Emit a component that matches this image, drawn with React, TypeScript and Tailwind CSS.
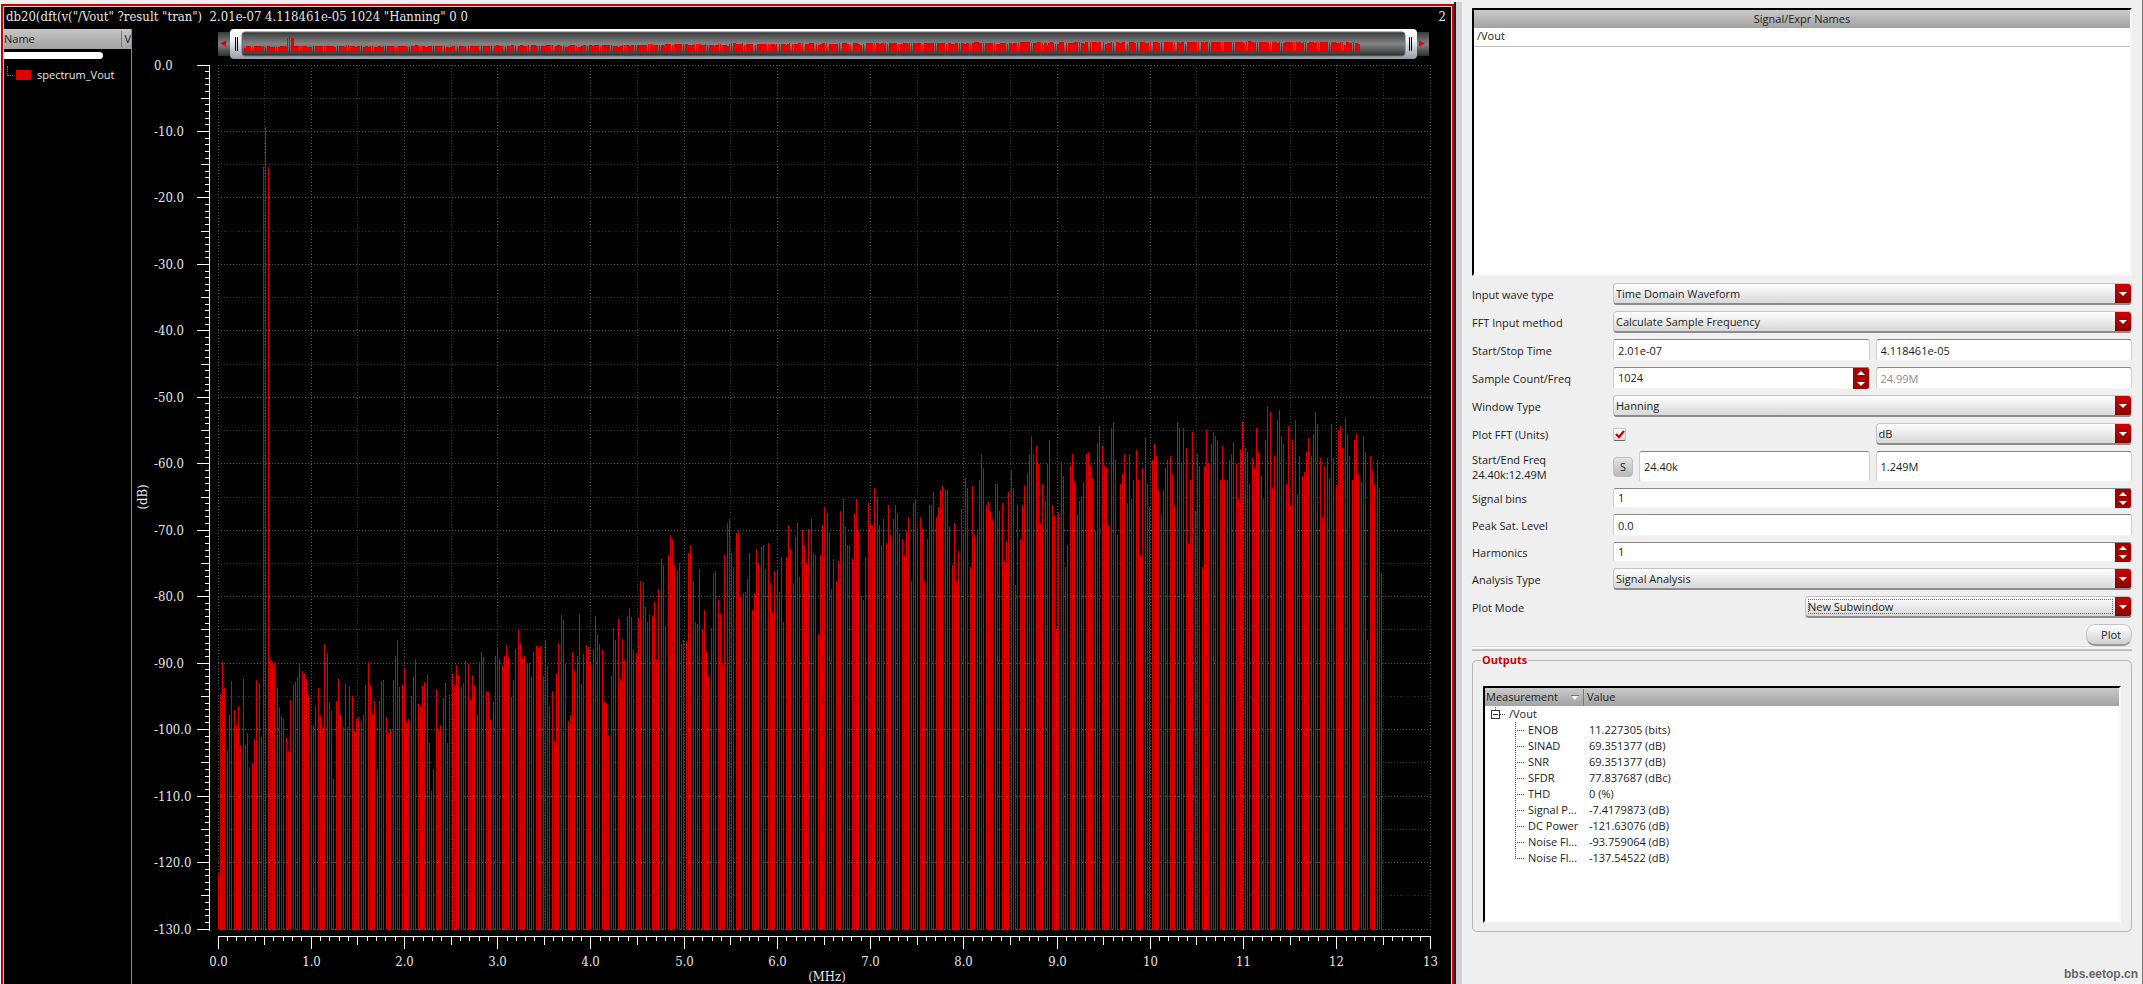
import React, { useState } from 'react';

// FFT magnitude per bin (dB), DC first
const SPECTRUM = [
  -121.6, -94.6, -89.7, -93.6, -103.2, -97.7, -92.6, -96.9, -99.3, -96.3, -102.2, -92.3, -102.2, -100.4, -105.6, -104.9,
  -101.3, -92.4, -93.0, -101.0, -15.3, -9.2, -15.3, -89.4, -89.7, -90.0, -93.6, -96.5, -98.1, -98.4, -101.1, -103.1,
  -95.4, -93.2, -92.7, -92.0, -90.1, -91.1, -91.5, -92.3, -94.7, -99.3, -99.3, -96.3, -93.6, -97.8, -99.5, -87.0,
  -88.4, -95.7, -97.1, -107.4, -95.6, -92.3, -97.8, -99.5, -93.0, -99.5, -93.3, -94.8, -100.2, -98.3, -98.0, -98.6,
  -97.7, -93.2, -89.7, -93.2, -97.5, -95.6, -105.8, -95.6, -92.6, -92.4, -98.1, -100.5, -99.8, -92.4, -88.8, -86.4,
  -93.5, -93.2, -90.6, -98.6, -98.3, -94.8, -92.0, -89.3, -96.0, -96.3, -93.3, -92.7, -91.7, -102.0, -109.2, -105.9,
  -93.8, -99.9, -99.2, -95.1, -92.9, -101.9, -94.7, -91.5, -93.3, -90.2, -91.7, -93.5, -92.9, -89.6, -90.0, -95.3,
  -91.7, -93.2, -97.8, -89.7, -88.2, -89.0, -94.1, -94.2, -98.4, -95.7, -88.8, -87.6, -89.3, -90.2, -88.8, -87.2,
  -89.0, -95.0, -92.4, -87.8, -84.9, -86.9, -89.1, -88.8, -89.9, -89.9, -92.0, -88.2, -87.3, -87.5, -87.3, -91.8,
  -86.4, -90.3, -96.3, -94.1, -101.6, -91.4, -86.9, -82.7, -83.4, -90.0, -98.7, -97.7, -88.2, -90.9, -88.8, -82.5,
  -93.0, -88.5, -87.2, -87.5, -90.0, -87.8, -82.8, -85.7, -87.0, -87.9, -95.7, -95.9, -100.7, -91.8, -84.6, -86.4,
  -83.3, -92.3, -86.3, -89.4, -82.8, -81.6, -83.0, -87.9, -88.4, -83.1, -77.5, -77.7, -81.5, -83.7, -82.5, -82.8,
  -80.7, -89.3, -78.7, -74.3, -75.2, -84.4, -73.7, -70.6, -71.3, -75.1, -76.1, -74.9, -87.0, -86.4, -86.7, -73.4,
  -72.1, -77.6, -83.8, -84.0, -75.7, -84.9, -82.0, -88.2, -91.8, -84.7, -76.4, -76.0, -80.4, -82.5, -90.1, -73.7,
  -68.8, -68.3, -73.4, -75.5, -70.4, -70.0, -79.8, -79.3, -79.2, -77.2, -73.3, -81.9, -79.3, -72.8, -74.8, -72.4,
  -72.1, -75.7, -71.9, -77.9, -82.3, -76.1, -75.8, -79.2, -74.0, -83.7, -74.0, -69.1, -72.7, -77.8, -70.9, -68.9,
  -77.0, -69.8, -72.1, -74.9, -69.7, -68.2, -73.4, -73.7, -85.5, -73.7, -69.2, -66.5, -67.4, -70.3, -78.7, -74.2,
  -77.5, -74.5, -67.1, -65.3, -69.4, -72.2, -72.2, -74.3, -67.3, -65.2, -70.1, -79.8, -80.4, -73.9, -65.8, -68.9,
  -69.2, -63.6, -64.9, -69.1, -72.2, -68.3, -71.9, -66.2, -70.6, -68.2, -66.1, -67.4, -70.4, -71.3, -73.7, -70.0,
  -67.9, -77.6, -65.9, -65.2, -69.7, -67.9, -69.8, -77.6, -71.3, -66.2, -66.2, -64.2, -67.9, -66.5, -63.8, -63.3,
  -63.9, -63.9, -69.5, -75.2, -68.8, -77.6, -73.0, -66.7, -70.4, -62.0, -63.5, -75.4, -63.3, -70.7, -70.0, -62.4,
  -58.4, -60.6, -66.1, -65.6, -67.0, -68.3, -62.9, -62.9, -67.1, -65.9, -74.6, -71.5, -64.1, -60.9, -63.5, -78.2,
  -66.2, -71.2, -66.1, -63.3, -61.5, -58.5, -55.7, -58.5, -57.3, -59.9, -68.9, -63.0, -65.6, -60.0, -56.4, -66.2,
  -67.7, -84.9, -67.4, -59.6, -61.8, -75.4, -72.1, -60.2, -58.5, -62.7, -67.6, -65.5, -64.9, -62.7, -58.4, -58.1,
  -60.2, -62.1, -70.1, -57.0, -54.2, -57.3, -60.3, -60.5, -69.2, -54.5, -53.6, -59.4, -70.6, -63.0, -61.4, -58.5,
  -65.9, -58.5, -65.3, -62.3, -57.8, -62.3, -73.7, -60.6, -56.1, -63.0, -66.4, -59.3, -56.9, -58.8, -63.9, -67.6,
  -63.8, -60.6, -59.3, -58.7, -61.4, -66.1, -53.7, -54.6, -59.9, -54.5, -57.5, -71.9, -62.3, -55.1, -67.0, -58.5,
  -60.3, -75.4, -60.2, -54.8, -60.0, -57.0, -55.1, -55.7, -56.4, -62.3, -57.3, -62.3, -62.3, -59.3, -58.4, -56.7,
  -60.0, -65.2, -57.8, -53.6, -57.5, -58.2, -62.9, -59.0, -60.5, -54.6, -58.1, -61.8, -65.3, -56.3, -51.2, -52.2,
  -63.5, -58.8, -53.3, -51.9, -55.8, -57.0, -63.0, -54.2, -66.1, -56.4, -53.4, -64.6, -58.7, -61.8, -61.1, -58.1,
  -56.1, -58.7, -55.4, -52.2, -53.9, -59.0, -67.9, -60.2, -59.1, -62.0, -53.9, -59.1, -63.2, -54.8, -54.3, -57.5,
  -53.1, -55.5, -58.7, -62.4, -56.4, -55.4, -61.5, -62.7, -55.8, -58.1, -86.4, -58.7, -60.8, -62.9, -59.4, -63.6,
  -76.3,
];

const MEASUREMENTS = [
  ['ENOB', '11.227305 (bits)'],
  ['SINAD', '69.351377 (dB)'],
  ['SNR', '69.351377 (dB)'],
  ['SFDR', '77.837687 (dBc)'],
  ['THD', '0 (%)'],
  ['Signal P...', '-7.4179873 (dB)'],
  ['DC Power', '-121.63076 (dB)'],
  ['Noise Fl...', '-93.759064 (dB)'],
  ['Noise Fl...', '-137.54522 (dB)'],
];

// plot geometry, in viewBox units
const LEFT = 86;
const TOP = 36;
const WIDTH = 1212;
const HEIGHT = 864;

const freqX = (mhz: number) => Math.floor(LEFT + (mhz * WIDTH) / 13) + 0.5;
const dbY = (db: number) => Math.floor(TOP - (db * HEIGHT) / 130) + 0.5;

const range = (n: number) => Array.from({ length: n }, (_, i) => i);

const barsPath = SPECTRUM.map((db, k) => `M${Math.floor(LEFT + 0.1 + k * 2.2724) + 0.5} ${dbY(db)}V901`).join('');

const overviewPath = SPECTRUM.map((db, k) => {
  const x = Math.floor(112 + k * 2.175);
  const w = k !== 20 && k !== 21 && (k % 11 < 3 || (k % 11 > 4 && k % 11 < 9)) ? 3 : 1;
  const h = Math.max(4, Math.round(16 + db * 0.107));
  return `M${x} 23v${-h}h${w}v${h}z`;
}).join('');

const Scrubber: React.FC = () => (
  <g>
    <defs>
      <linearGradient id="track" x1="0" y1="0" x2="0" y2="1">
        <stop offset="0" stopColor="#3a3a3a" />
        <stop offset="0.5" stopColor="#848484" />
        <stop offset="1" stopColor="#2e2e2e" />
      </linearGradient>
      <linearGradient id="frame" x1="0" y1="0" x2="0" y2="1">
        <stop offset="0" stopColor="#ffffff" />
        <stop offset="0.4" stopColor="#eceef2" />
        <stop offset="1" stopColor="#939ca6" />
      </linearGradient>
    </defs>
    <rect x="86" y="3" width="1211" height="24" fill="url(#track)" />
    <rect x="98" y="0" width="1187" height="30" rx="4" fill="url(#frame)" />
    <rect x="110" y="3" width="1163" height="24" rx="3" fill="url(#track)" stroke="#6c7076" />
    <path d="M103.500 8v14M105.500 8v14M1277.500 8v14M1279.500 8v14" stroke="#000" shapeRendering="crispEdges" />
    <path d="M88 14.500l6-3v6zM1293 14.500l-6-3v6z" fill="#e00000" />
    <path d={overviewPath} fill="#e60000" shapeRendering="crispEdges" />
  </g>
);

const SpectrumPlot: React.FC = () => (
  <svg viewBox="0 0 1319 955" className="block w-full h-auto" role="img" aria-label="spectrum_Vout">
    <Scrubber />

    <g shapeRendering="crispEdges" strokeDasharray="1 2">
      {range(27).map((i) => (
        <path key={`h${i}`} d={`M86 ${dbY(-i * 5)}H1299`} stroke={i % 2 ? '#303030' : '#555555'} />
      ))}
      {range(27).map((i) => (
        <path key={`v${i}`} d={`M${freqX(i / 2)} 36V901`} stroke={i % 2 ? '#303030' : '#555555'} />
      ))}
    </g>

    <path d={barsPath} stroke="#dc0000" shapeRendering="crispEdges" />

    <g stroke="#fff" shapeRendering="crispEdges">
      <path d="M77.500 36V902M86 907.500H1299" />
      {range(131).map((i) => (
        <path key={`y${i}`} d={`M${i % 10 === 0 ? 65 : i % 5 === 0 ? 69 : 73} ${dbY(-i)}H77`} />
      ))}
      {range(131).map((i) => (
        <path key={`x${i}`} d={`M${freqX(i / 10)} 907V${i % 10 === 0 ? 920 : i % 5 === 0 ? 916 : 912}`} />
      ))}
    </g>

    <g fill="#e6e6e6" fontSize="13" fontFamily='"DejaVu Serif Condensed", "DejaVu Serif", serif'>
      {range(14).map((i) => (
        <text key={`ly${i}`} x="22" y={dbY(-i * 10) + 4}>
          {i === 0 ? '0.0' : `${-i * 10}.0`}
        </text>
      ))}
      {range(14).map((i) => (
        <text key={`lx${i}`} x={freqX(i)} y="937" textAnchor="middle">
          {i < 10 ? `${i}.0` : i}
        </text>
      ))}
      <text x="695" y="952" textAnchor="middle">(MHz)</text>
      <text x="15" y="468" textAnchor="middle" transform="rotate(-90 15 468)">(dB)</text>
    </g>
  </svg>
);

interface SelectProps {
  id: string;
  value: string;
  className?: string;
  focused?: boolean;
  label?: string;
}

const Select: React.FC<SelectProps> = ({ id, value, className = '', focused, label }) => (
  <div className={`relative flex h-[22px] rounded border border-[#c4c4c4] border-b-2 border-b-[#8c8c8c] bg-linear-to-b from-white to-[#d8d8d8] overflow-hidden ${className}`}>
    <select id={id} aria-label={label} className="flex-1 appearance-none pl-0.5 bg-transparent outline-none">
      <option>{value}</option>
    </select>
    {focused && <span className="absolute inset-y-0.5 left-0.5 right-[18px] border border-dotted border-[#666] pointer-events-none" />}
    <span className="w-4 flex items-center justify-center bg-linear-to-b from-[#cc0000] to-[#8c0000] pointer-events-none">
      <svg width="8" height="4" viewBox="0 0 8 4"><path d="M0 0h8L4 4z" fill="#fff" /></svg>
    </span>
  </div>
);

interface FieldProps {
  id: string;
  value: string;
  className?: string;
  disabled?: boolean;
  label?: string;
}

const fieldClass = 'min-w-0 rounded-[3px] border border-[#cfcfcf] border-t-[#888] border-b-[#f4f4f4] bg-white px-1 outline-none';

const TextField: React.FC<FieldProps> = ({ id, value, className = 'h-[22px]', disabled, label }) => {
  const [text, setText] = useState(value);
  return (
    <input
      id={id}
      aria-label={label}
      value={text}
      disabled={disabled}
      onChange={(e) => setText(e.target.value)}
      className={`w-full disabled:text-[#8a8a8a] ${fieldClass} ${className}`}
    />
  );
};

const SpinField: React.FC<FieldProps> = ({ id, value, className = 'h-5' }) => {
  const [count, setCount] = useState(Number(value));
  return (
    <div className={`flex ${className}`}>
      <input
        id={id}
        value={count}
        onChange={(e) => setCount(Number(e.target.value) || 0)}
        className={`flex-1 rounded-r-none border-r-0 ${fieldClass}`}
      />
      <div className="w-[17px] flex flex-col rounded-r-[3px] border-t border-[#888] border-r border-r-[#cfcfcf] bg-[#a00000] overflow-hidden">
        <button type="button" aria-label="Increase" onClick={() => setCount(count + 1)} className="flex-1 flex items-center justify-center">
          <svg width="8" height="4" viewBox="0 0 8 4"><path d="M0 4h8L4 0z" fill="#fff" /></svg>
        </button>
        <button type="button" aria-label="Decrease" onClick={() => setCount(count - 1)} className="flex-1 flex items-center justify-center">
          <svg width="8" height="4" viewBox="0 0 8 4"><path d="M0 0h8L4 4z" fill="#fff" /></svg>
        </button>
      </div>
    </div>
  );
};

const Row: React.FC<{ id: string; label: React.ReactNode; children: React.ReactNode }> = ({ id, label, children }) => (
  <div className="flex items-center">
    <label htmlFor={id} className="w-[141px] shrink-0 leading-[15px]">{label}</label>
    <div className="flex-1 grid grid-flow-col auto-cols-fr items-center gap-1.5">{children}</div>
  </div>
);

const App: React.FC = () => {
  const [plotFft, setPlotFft] = useState(true);

  return (
    <div className="min-h-screen flex bg-[#efefef] text-[11px] leading-4 text-[#1c1c1c] font-['Open_Sans','Noto_Sans',sans-serif]">
      {/* Waveform window */}
      <main className="flex-1 min-w-0 flex flex-col pt-1 pl-px">
        <div className="flex-1 flex flex-col border-2 border-b-0 border-[#cc0000]">
          <div className="flex-1 flex flex-col border border-b-0 border-[#f4cccc] bg-black">
            <div className="h-[22px] flex justify-between pl-0.5 pr-[5px] text-[13px] leading-[19px] text-[#e6e6e6] font-['DejaVu_Serif_Condensed','DejaVu_Serif',serif]">
              <span className="whitespace-pre">{'db20(dft(v("/Vout" ?result "tran")  2.01e-07 4.118461e-05 1024 "Hanning" 0 0'}</span>
              <span>2</span>
            </div>
            <div className="flex-1 flex">
              <aside className="w-32 shrink-0 border-r border-[#8a8a8a] overflow-hidden">
                <div className="h-5 flex items-center bg-linear-to-b from-[#c6c6c6] to-[#a2a2a2]">
                  <span className="w-[120px] border-r border-[#777]">Name</span>
                  <span className="pl-0.5">V</span>
                </div>
                <div className="mt-[3px] w-[99px] h-[7px] rounded-r bg-white" />
                <div className="mt-[7px] pl-[3px] flex items-center gap-[3px] text-[#e6e6e6]">
                  <span className="w-1.5 h-2.5 mb-2 border-l border-b border-dotted border-[#777]" />
                  <span className="w-[15px] h-2.5 bg-[#e00000]" />
                  <span className="pl-[3px] leading-[18px]">spectrum_Vout</span>
                </div>
              </aside>
              <div className="flex-1 min-w-0">
                <SpectrumPlot />
              </div>
            </div>
          </div>
        </div>
      </main>

      <div className="w-2 mt-0.5 shrink-0 border-l-2 border-[#222] bg-[#d2d2d8]" />

      {/* Spectrum assistant */}
      <section className="w-[681px] shrink-0 flex flex-col pt-2 pl-2.5 pr-2.5 border-r border-[#777]">
        <div className="h-[268px] border-2 border-t-black border-l-black border-r-[#f7f7f7] border-b-[#f7f7f7] bg-white">
          <table className="w-full border-collapse">
            <thead>
              <tr>
                <th className="h-[18px] p-0 font-normal bg-linear-to-b from-[#cacaca] to-[#a2a2a2]">Signal/Expr Names</th>
              </tr>
            </thead>
            <tbody>
              <tr>
                <td className="h-[18px] p-0 pl-[3px] leading-[15px] align-top border-b border-[#c0c0c0]">/Vout</td>
              </tr>
            </tbody>
          </table>
        </div>

        <form className="mt-[7px] flex flex-col gap-1.5" onSubmit={(e) => e.preventDefault()}>
          <Row id="wave" label="Input wave type">
            <Select id="wave" value="Time Domain Waveform" />
          </Row>
          <Row id="method" label="FFT Input method">
            <Select id="method" value="Calculate Sample Frequency" />
          </Row>
          <Row id="start" label="Start/Stop Time">
            <TextField id="start" value="2.01e-07" />
            <TextField id="stop" value="4.118461e-05" label="Stop time" />
          </Row>
          <Row id="count" label="Sample Count/Freq">
            <SpinField id="count" value="1024" className="h-[22px]" />
            <TextField id="freq" value="24.99M" label="Sample frequency" disabled />
          </Row>
          <Row id="window" label="Window Type">
            <Select id="window" value="Hanning" />
          </Row>
          <Row id="fft" label="Plot FFT (Units)">
            <div className="flex items-center">
              <span className="relative flex">
                <input
                  id="fft"
                  type="checkbox"
                  checked={plotFft}
                  onChange={(e) => setPlotFft(e.target.checked)}
                  className="appearance-none size-[13px] rounded-[2px] border border-[#c4c4c4] border-b-[#666] bg-linear-to-b from-white to-[#dcdcdc]"
                />
                {plotFft && (
                  <svg className="absolute inset-0 pointer-events-none" width="13" height="13" viewBox="0 0 13 13">
                    <path d="M3 6l3 3 5-6" fill="none" stroke="#cc0000" strokeWidth="2.200" />
                  </svg>
                )}
              </span>
            </div>
            <Select id="units" value="dB" label="Units" />
          </Row>
          <Row id="fstart" label={<>Start/End Freq<br />24.40k:12.49M</>}>
            <div className="flex items-center gap-1.5">
              <button type="button" className="size-5 shrink-0 rounded border border-[#bdbdbd] bg-linear-to-b from-[#e4e4e4] to-[#b8b8b8]">S</button>
              <TextField id="fstart" value="24.40k" className="h-[31px]" />
            </div>
            <TextField id="fend" value="1.249M" label="End frequency" className="h-[31px]" />
          </Row>
          <Row id="bins" label="Signal bins">
            <SpinField id="bins" value="1" />
          </Row>
          <Row id="peak" label="Peak Sat. Level">
            <TextField id="peak" value="0.0" />
          </Row>
          <Row id="harm" label="Harmonics">
            <SpinField id="harm" value="1" />
          </Row>
          <Row id="analysis" label="Analysis Type">
            <Select id="analysis" value="Signal Analysis" />
          </Row>
          <Row id="mode" label="Plot Mode">
            <Select id="mode" value="New Subwindow" className="w-[327px] justify-self-end" focused />
          </Row>
          <button type="submit" className="self-end w-[46px] h-[22px] pl-1 rounded-[9px] border border-[#c4c4c4] border-b-2 border-b-[#999] bg-linear-to-b from-white to-[#d0d0d0]">
            Plot
          </button>
        </form>

        <hr className="h-[5px] border-0 border-t border-t-[#dcdcdc] border-b-2 border-b-[#c0c0c0] bg-[#f6f6f6]" />

        <fieldset className="px-2.5 pb-2 rounded-[5px] border border-[#b4b4b4]">
          <legend className="-ml-0.5 px-px leading-[18px] font-bold text-[#cc0000]">Outputs</legend>
          <div className="mt-[17px] h-[237px] border-2 border-t-black border-l-black border-r-[#f7f7f7] border-b-[#f7f7f7] bg-white">
            <table className="w-full table-fixed border-collapse text-left">
              <thead>
                <tr className="h-[18px] bg-linear-to-b from-[#cacaca] to-[#a2a2a2]">
                  <th className="w-[99px] p-0 pl-px font-normal">
                    <span className="flex items-center justify-between pr-1 border-r border-[#777]">
                      Measurement
                      <svg width="8" height="5" viewBox="0 0 8 5"><path d="M0 0h8L4 5z" fill="#fff" /><path d="M0 .5h8" stroke="#777" /></svg>
                    </span>
                  </th>
                  <th className="p-0 pl-[3px] font-normal">Value</th>
                </tr>
              </thead>
              <tbody>
                <tr>
                  <td className="p-0 pl-1.5">
                    <span className="flex items-center gap-1">
                      <svg width="14" height="16" viewBox="0 0 14 16" shapeRendering="crispEdges">
                        <path d="M.5 4.500h8v8h-8zM2 8.500h5" fill="none" stroke="#333" />
                        <path d="M4.500 1v3M9 8.500h5" stroke="#555" strokeDasharray="1 1" />
                      </svg>
                      /Vout
                    </span>
                  </td>
                  <td className="p-0" />
                </tr>
                {MEASUREMENTS.map(([name, value], i) => (
                  <tr key={i}>
                    <td className="p-0 pl-[30px]">
                      <span className="flex items-center gap-[3px] whitespace-nowrap">
                        <svg width="10" height="16" viewBox="0 0 10 16" className="shrink-0" shapeRendering="crispEdges">
                          <path d={`M.5 0V${i === MEASUREMENTS.length - 1 ? 8 : 16}M0 8.500h10`} stroke="#555" strokeDasharray="1 1" />
                        </svg>
                        {name}
                      </span>
                    </td>
                    <td className="p-0 pl-[5px]">{value}</td>
                  </tr>
                ))}
              </tbody>
            </table>
          </div>
        </fieldset>

        <div className="mt-auto mb-0.5 -mr-1.5 self-end text-xs font-bold text-[#666] font-['Liberation_Sans_Narrow','Liberation_Sans',sans-serif]">
          bbs.eetop.cn
        </div>
      </section>
    </div>
  );
};

export default App;
